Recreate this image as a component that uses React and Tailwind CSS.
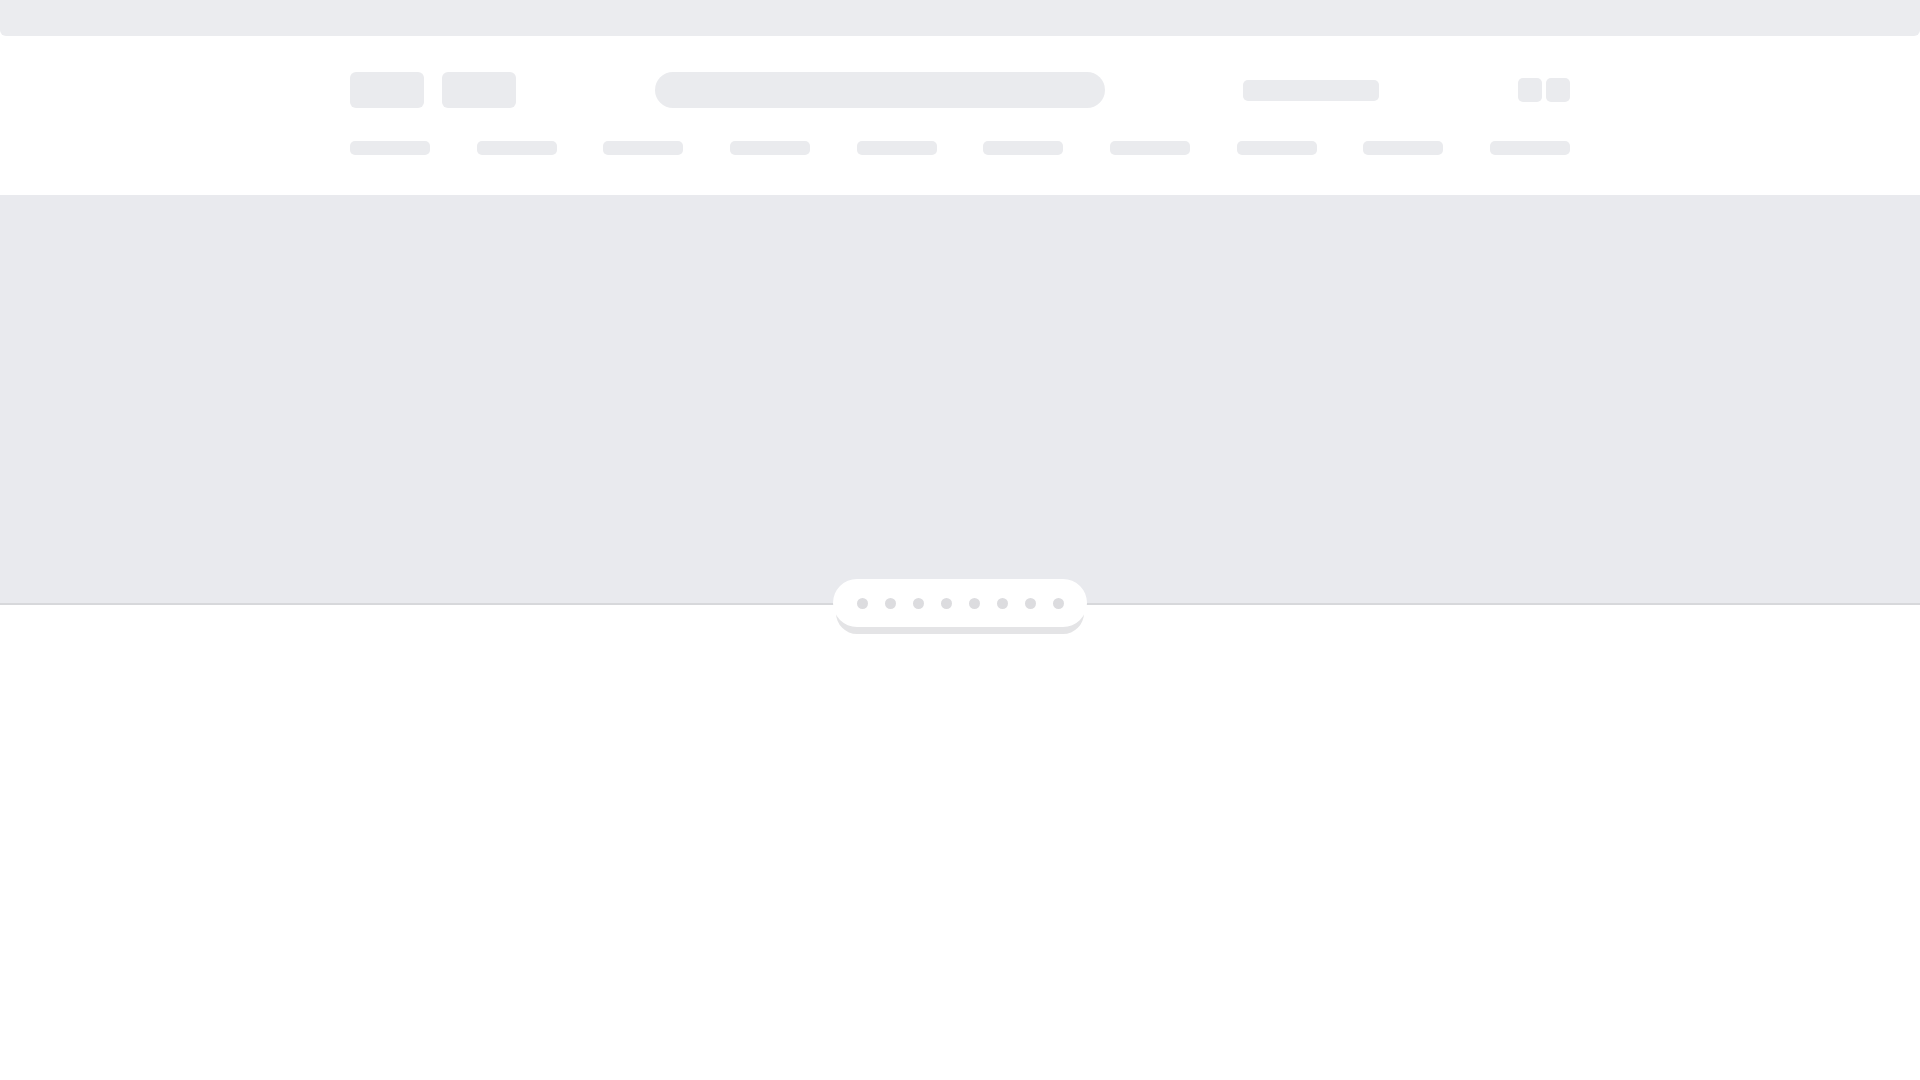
const navItems = Array.from({ length: 10 });
const dots = Array.from({ length: 8 });

const Bone = ({ className = '' }) => <div className={`bg-[#eaebee] ${className}`} />;

export default function App() {
    return (
        <div className="min-h-screen bg-white">
            <div className="h-9 bg-[#ebecef] rounded-b-md" />

            <header className="h-[159px] pt-9">
                <div className="max-w-[1220px] mx-auto">
                    <div className="flex items-center justify-between h-9">
                        <div className="flex gap-[18px]">
                            <Bone className="w-[74px] h-9 rounded-md" />
                            <Bone className="w-[74px] h-9 rounded-md" />
                        </div>
                        <Bone className="w-[450px] h-9 rounded-full" />
                        <Bone className="w-[136px] h-[21px] rounded-[5px]" />
                        <div className="flex gap-1">
                            <Bone className="w-6 h-6 rounded-[5px]" />
                            <Bone className="w-6 h-6 rounded-[5px]" />
                        </div>
                    </div>
                    <nav className="flex justify-between mt-[33px]">
                        {navItems.map((_, i) => (
                            <Bone key={i} className="w-20 h-[14px] rounded-[5px]" />
                        ))}
                    </nav>
                </div>
            </header>

            <section className="relative h-[410px] bg-[#e9eaee] border-b-2 border-[#d7d8db]">
                <div className="absolute left-1/2 bottom-0 -translate-x-1/2 translate-y-1/2 h-12 w-[254px] bg-white rounded-full flex items-center justify-center gap-[17px] shadow-[0_10px_0_-3px_#e4e4e6]">
                    {dots.map((_, i) => (
                        <span key={i} className="w-[11px] h-[11px] rounded-full bg-[#dcdcdf]" />
                    ))}
                </div>
            </section>
        </div>
    );
}
